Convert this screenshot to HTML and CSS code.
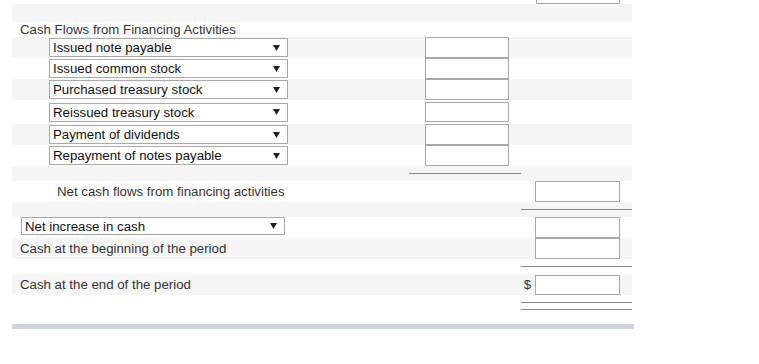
FILE: index.html
```html
<!DOCTYPE html>
<html lang="en">
<head>
<meta charset="UTF-8" />
<meta name="viewport" content="width=device-width, initial-scale=1" />
<title>Statement of Cash Flows</title>
<link rel="stylesheet" href="styles.css">
</head>
<body>
  <div class="sheet">
    <!-- tail of the previous section -->
    <div class="row pre">
      <div class="label"></div>
      <div class="amt"></div>
      <div class="amt"><input class="box short" type="text"></div>
    </div>
    <div class="row alt h18"><div></div><div></div><div></div></div>

    <div class="row h15">
      <div class="label">Cash Flows from Financing Activities</div>
      <div class="amt"></div>
      <div class="amt"></div>
    </div>

    <div class="row alt h21">
      <div class="label sub">
        <span class="dropdown"><select><option>Issued note payable</option></select><svg class="caret" width="7" height="6" viewBox="0 0 7 6"><polygon points="0,0 7,0 3.5,6" /></svg></span>
      </div>
      <div class="amt"><input class="box" type="text"></div>
      <div class="amt"></div>
    </div>
    <div class="row h21">
      <div class="label sub">
        <span class="dropdown"><select><option>Issued common stock</option></select><svg class="caret" width="7" height="6" viewBox="0 0 7 6"><polygon points="0,0 7,0 3.5,6" /></svg></span>
      </div>
      <div class="amt"><input class="box" type="text"></div>
      <div class="amt"></div>
    </div>
    <div class="row alt h21">
      <div class="label sub">
        <span class="dropdown"><select><option>Purchased treasury stock</option></select><svg class="caret" width="7" height="6" viewBox="0 0 7 6"><polygon points="0,0 7,0 3.5,6" /></svg></span>
      </div>
      <div class="amt"><input class="box" type="text"></div>
      <div class="amt"></div>
    </div>
    <div class="row h24">
      <div class="label sub">
        <span class="dropdown"><select><option>Reissued treasury stock</option></select><svg class="caret" width="7" height="6" viewBox="0 0 7 6"><polygon points="0,0 7,0 3.5,6" /></svg></span>
      </div>
      <div class="amt"><input class="box short" type="text"></div>
      <div class="amt"></div>
    </div>
    <div class="row alt h21">
      <div class="label sub">
        <span class="dropdown"><select><option>Payment of dividends</option></select><svg class="caret" width="7" height="6" viewBox="0 0 7 6"><polygon points="0,0 7,0 3.5,6" /></svg></span>
      </div>
      <div class="amt"><input class="box" type="text"></div>
      <div class="amt"></div>
    </div>
    <div class="row h21">
      <div class="label sub">
        <span class="dropdown"><select><option>Repayment of notes payable</option></select><svg class="caret" width="7" height="6" viewBox="0 0 7 6"><polygon points="0,0 7,0 3.5,6" /></svg></span>
      </div>
      <div class="amt"><input class="box" type="text"></div>
      <div class="amt"></div>
    </div>

    <div class="row alt h15">
      <div></div>
      <div class="rules"><div class="rule"></div></div>
      <div></div>
    </div>

    <div class="row h21">
      <div class="label total">Net cash flows from financing activities</div>
      <div class="amt"></div>
      <div class="amt"><input class="box wide" type="text"></div>
    </div>
    <div class="row alt h15">
      <div></div>
      <div></div>
      <div class="rules"><div class="rule"></div></div>
    </div>

    <div class="row h21 top">
      <div class="label">
        <span class="dropdown long"><select><option>Net increase in cash</option></select><svg class="caret" width="7" height="6" viewBox="0 0 7 6"><polygon points="0,0 7,0 3.5,6" /></svg></span>
      </div>
      <div class="amt"></div>
      <div class="amt"><input class="box wide" type="text"></div>
    </div>
    <div class="row alt h21">
      <div class="label">Cash at the beginning of the period</div>
      <div class="amt"></div>
      <div class="amt"><input class="box wide" type="text"></div>
    </div>
    <div class="row h15">
      <div></div>
      <div></div>
      <div class="rules"><div class="rule"></div></div>
    </div>

    <div class="row alt h21">
      <div class="label">Cash at the end of the period</div>
      <div class="amt"></div>
      <div class="amt"><span class="dollar">$</span><input class="box wide short" type="text"></div>
    </div>
    <div class="row h29">
      <div></div>
      <div></div>
      <div class="rules"><div class="rule"></div><div class="rule second"></div></div>
    </div>
  </div>
  <div class="bar"></div>
</body>
</html>
```

FILE: styles.css
```css
* {
  box-sizing: border-box;
}
body {
  margin: 0;
  font-family: 'Liberation Sans', Arial, sans-serif;
  font-size: 13.25px;
  color: #333;
  background: #fff;
}
.sheet {
  margin-left: 12px;
  width: 620px;
}
.row {
  display: grid;
  grid-template-columns: 397px 112px 111px;
}
.row.alt {
  background: #f5f5f5;
}
.pre {
  height: 21px;
  margin-top: -17px;
}
.h15 { height: 15px; }
.h18 { height: 18px; }
.h21 { height: 21px; }
.h24 { height: 24px; }
.h29 { height: 29px; }

.label {
  display: flex;
  align-items: center;
  padding-left: 8px;
  line-height: 15px;
  white-space: nowrap;
}
.label.sub {
  padding-left: 37px;
}
.label.total {
  padding-left: 45px;
}
.row.top .label {
  align-items: flex-start;
  padding-left: 9px;
}

.dropdown {
  display: flex;
  align-items: center;
  width: 239px;
  height: 19px;
  background: #fff;
  border: 1px solid #a9a9a9;
}
.dropdown.long {
  width: 264px;
  height: 18px;
}
.dropdown select {
  flex: 1;
  height: 100%;
  border: none;
  outline: none;
  background: transparent;
  appearance: none;
  -webkit-appearance: none;
  font: inherit;
  color: #111;
  padding: 0 0 0 3px;
  margin: 0;
}
.caret {
  margin-right: 7px;
  fill: #222;
}

.amt {
  display: flex;
  justify-content: flex-end;
  align-items: center;
  padding-right: 12px;
}
.box {
  display: block;
  width: 84px;
  height: 21px;
  border: 1px solid #a9a9a9;
  background: #fff;
  padding: 0;
  margin: 0;
}
.box.wide {
  width: 85px;
}
.box.short {
  height: 20px;
}
.dollar {
  margin-right: 4px;
  color: #333;
}

.rules {
  padding-top: 7px;
}
.rule {
  height: 1px;
  background: #888;
}
.rule.second {
  margin-top: 6px;
}

.bar {
  margin-left: 12px;
  width: 622px;
  height: 5px;
  background: #cdd4df;
}
```
